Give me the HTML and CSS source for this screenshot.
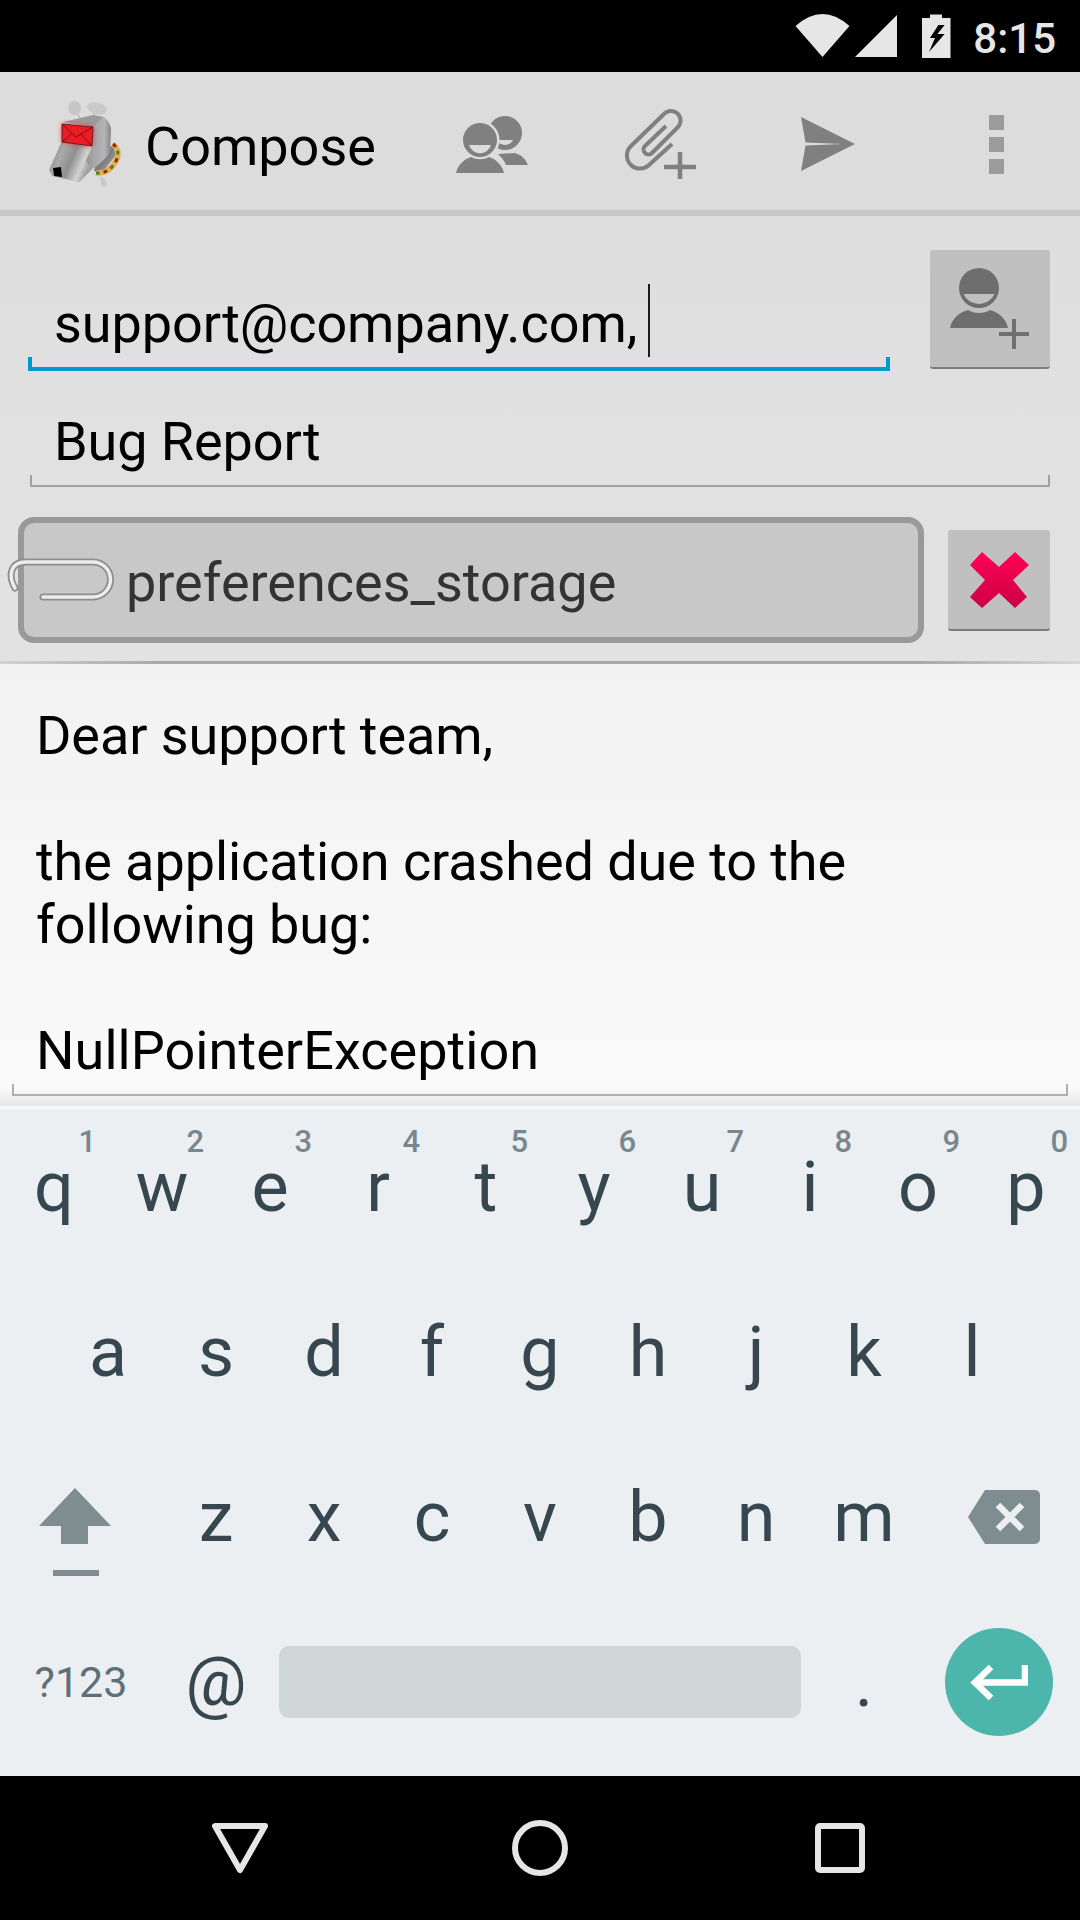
FILE: index.html
```html
<!DOCTYPE html>
<html lang="en">
<head>
<meta charset="utf-8">
<title>Compose</title>
<link rel="stylesheet" href="styles.css">
</head>
<body>
<div class="screen">
  <header class="status">
    <svg class="st-wifi" width="56" height="44" viewBox="0 0 56 44"><path d="M0.500 12 Q27.5 -12 54.500 12 L27.5 43 Z" fill="#e6e6e6"/></svg>
    <svg class="st-signal" width="44" height="44" viewBox="0 0 44 44"><path d="M1 43 L43 1 V43 Z" fill="#e6e6e6"/></svg>
    <svg class="st-batt" width="30" height="44" viewBox="0 0 30 44"><path d="M9 0.500 H21 V4 H29.500 V44 H1 V4 H9 Z" fill="#e6e6e6"/><path d="M17.400 11 L9 24 H14 L8 38 L23.600 20 H16.400 L23.600 11 Z" fill="#000"/></svg>
    <span class="st-time">8:15</span>
  </header>

  <nav class="toolbar">
    <svg class="logo" width="110" height="110" viewBox="0 1 110 110">
      <defs>
        <linearGradient id="side" x1="0" y1="0" x2="1" y2="0">
          <stop offset="0" stop-color="#7f7f81"/><stop offset="0.450" stop-color="#a6a6a8"/><stop offset="0.800" stop-color="#b4b4b6"/><stop offset="1" stop-color="#858587"/>
        </linearGradient>
        <linearGradient id="snout" x1="0" y1="0" x2="1" y2="0.400">
          <stop offset="0" stop-color="#7b7b7d"/><stop offset="0.350" stop-color="#aaaaab"/><stop offset="0.600" stop-color="#8f8f91"/><stop offset="0.850" stop-color="#d2d2d2"/><stop offset="1" stop-color="#a0a0a2"/>
        </linearGradient>
        <linearGradient id="neck" x1="0" y1="0" x2="1" y2="1">
          <stop offset="0" stop-color="#d8d8d8"/><stop offset="0.500" stop-color="#7a7a7a"/><stop offset="1" stop-color="#b8b8b8"/>
        </linearGradient>
        <filter id="glow" x="-30%" y="-40%" width="160%" height="180%"><feGaussianBlur stdDeviation="2.500"/></filter>
      </defs>
      <ellipse cx="44.500" cy="23" rx="6.500" ry="7" fill="#c6c6c6"/>
      <ellipse cx="67" cy="23.500" rx="10" ry="6" transform="rotate(15 67 23.500)" fill="#c9c9c9"/>
      <path d="M48 29 L51 36 M64 29 L66 35" stroke="#bdbdbd" stroke-width="1.500" fill="none"/>
      <path d="M67 70 L83 60 L86 70 L72 88 L64 86 Z" fill="url(#neck)"/>
      <path d="M83 59 Q91 66 86 76 Q79 89 66 88" fill="none" stroke="#e3b04a" stroke-width="5.500"/>
      <path d="M83 59 Q91 66 86 76 Q79 89 66 88" fill="none" stroke="#8c2a1c" stroke-width="3" stroke-dasharray="4 12"/>
      <path d="M83 59 Q91 66 86 76 Q79 89 66 88" fill="none" stroke="#4f7a3a" stroke-width="3" stroke-dasharray="4 12" stroke-dashoffset="8"/>
      <path d="M70 91 Q75 93 77 99 Q74 104 71 99 Z" fill="#c8c8c8"/>
      <path d="M33 37 L63 30 L74 32 L63 42 Z" fill="#9b9b9d"/>
      <path d="M63 41 L74 32 Q81 38 81 45 L80 68 Q72 78 62 84 L49 97 L56 78 L50 62 L62 60 Z" fill="url(#side)"/>
      <path d="M32 56 L63 60 L56 76 L62 84 L49 97 L22 91 L19 85 Z" fill="url(#snout)"/>
      <path d="M23 83 L31 82 L32 92 L24 91 Z" fill="#000"/>
      <path d="M32 39 L63 42 L62 61 L32 57 Z" fill="#ff2020" filter="url(#glow)"/>
      <path d="M32 39 L63 42 L62 61 L32 57 Z" fill="#ed1c24" stroke="#3a1a1a" stroke-width="0.800"/>
      <path d="M32 39 L46 52 L63 42 M32 57 L42 48.500 M62 61 L51 49" fill="none" stroke="#5a1010" stroke-width="0.800"/>
    </svg>
    <h1 class="title">Compose</h1>
    <div class="actions">
      <div class="action">
        <svg width="76" height="64" viewBox="0 -4 76 64">
          <circle cx="51" cy="20" r="17" fill="#808080"/>
          <path d="M43 27 H59 A9 9 0 0 1 43 27 Z" fill="#dcdcdc"/>
          <path d="M61 40 C68 42 72 47 74 52 H52 C50 47 47 44 44 41 Z" fill="#808080"/>
          <circle cx="26" cy="27" r="19.500" fill="#dcdcdc"/>
          <circle cx="26" cy="27" r="17" fill="#808080"/>
          <path d="M15 32 H37 A11.500 11.500 0 0 1 15 32 Z" fill="#dcdcdc"/>
          <path d="M2 60 C4 51 11 46 17 44 C22 47 30 47 35 44 C41 46 48 51 50 60 Z" fill="#808080"/>
        </svg>
      </div>
      <div class="action">
        <svg width="76" height="76" viewBox="0 0 76 76">
          <path d="M50 41 L27 62 A13 13 0 0 1 9 43 L42 11 A9.500 9.500 0 0 1 56 24 L30 50 A4.500 4.500 0 0 1 23 43 L44 23" fill="none" stroke="#808080" stroke-width="4"/>
          <path d="M42 64 H74 M58 49 V80" fill="none" stroke="#808080" stroke-width="4.500"/>
        </svg>
      </div>
      <div class="action action-send">
        <svg width="56" height="56" viewBox="0 0 56 56">
          <path d="M1 1 L55 28 L1 55 L5.500 29.500 L42 28 L5.500 26.500 Z" fill="#808080"/>
        </svg>
      </div>
      <div class="action overflow">
        <span class="dot"></span><span class="dot"></span><span class="dot"></span>
      </div>
    </div>
  </nav>

  <section class="form">
    <div class="row-to">
      <div class="field field-active">
        <span class="field-text">support@company.com,<span class="caret"></span></span>
      </div>
      <button class="btn btn-add" type="button" aria-label="Add contact">
        <svg width="120" height="117" viewBox="0 0 120 117">
          <circle cx="49" cy="38" r="20" fill="#6e6e6e"/>
          <path d="M33.500 44 H64.500 A17 17 0 0 1 33.500 44 Z" fill="#c0c0c0"/>
          <path d="M20 78 C22 68 30 62 38 60 C44 64 54 64 60 60 C68 62 76 68 78 78 Z" fill="#6e6e6e"/>
          <path d="M69 84 H99 M84 69 V99" fill="none" stroke="#707070" stroke-width="4"/>
        </svg>
      </button>
    </div>
    <div class="field field-subject"><span class="field-text">Bug Report</span></div>
    <div class="row-attach">
      <div class="attachment">
        <svg class="clip" width="110" height="50" viewBox="0 0 110 50">
          <path d="M9 31 C2 19 4 5 20 5 H87 A17.500 17.500 0 0 1 87 40 H37" fill="none" stroke="#8d8d8d" stroke-width="7" stroke-linecap="round"/>
          <path d="M9 31 C2 19 4 5 20 5 H87 A17.500 17.500 0 0 1 87 40 H37" fill="none" stroke="#ececec" stroke-width="3.500" stroke-linecap="round"/>
        </svg>
        <span class="attach-name">preferences_storage</span>
      </div>
      <button class="btn btn-del" type="button" aria-label="Remove">
        <svg width="102" height="99" viewBox="0 0 102 99">
          <defs><linearGradient id="xred" x1="0" y1="0" x2="0" y2="1"><stop offset="0" stop-color="#ff0055"/><stop offset="1" stop-color="#cc0044"/></linearGradient></defs>
          <path d="M34 22 L51 37 L67 22 L81 35 L65 50 L79 67 L67 78 L51 63 L34 78 L22 67 L37 50 L22 35 Z" fill="url(#xred)"/>
        </svg>
      </button>
    </div>
  </section>
  <div class="divider"></div>

  <section class="message">
    <div class="message-box">
      <p class="line">Dear support team,</p>
      <p class="line">&nbsp;</p>
      <p class="line">the application crashed due to the</p>
      <p class="line">following bug:</p>
      <p class="line">&nbsp;</p>
      <p class="line line-code">NullPointerException</p>
    </div>
  </section>
  <div class="kbd-top"></div>

  <section class="keyboard">
    <div class="kb-row">
      <div class="key">q<span class="hint">1</span></div>
      <div class="key">w<span class="hint">2</span></div>
      <div class="key">e<span class="hint">3</span></div>
      <div class="key">r<span class="hint">4</span></div>
      <div class="key">t<span class="hint">5</span></div>
      <div class="key">y<span class="hint">6</span></div>
      <div class="key">u<span class="hint">7</span></div>
      <div class="key">i<span class="hint">8</span></div>
      <div class="key">o<span class="hint">9</span></div>
      <div class="key">p<span class="hint">0</span></div>
    </div>
    <div class="kb-row">
      <div class="key">a</div><div class="key">s</div><div class="key">d</div><div class="key">f</div><div class="key">g</div><div class="key">h</div><div class="key">j</div><div class="key">k</div><div class="key">l</div>
    </div>
    <div class="kb-row">
      <div class="key key-wide key-shift">
        <svg width="72" height="88" viewBox="0 0 72 88"><path d="M36 0 L72 38 H49 V56 H22 V38 H0 Z M14 82 H60 V88 H14 Z" fill="#7f8c90"/></svg>
      </div>
      <div class="key">z</div><div class="key">x</div><div class="key">c</div><div class="key">v</div><div class="key">b</div><div class="key">n</div><div class="key">m</div>
      <div class="key key-wide key-back">
        <svg width="72" height="54" viewBox="0 0 72 54"><path d="M17 0 H67 A5 5 0 0 1 72 5 V49 A5 5 0 0 1 67 54 H17 L0 27 Z" fill="#7f8c90"/><path d="M30 15 L54 39 M54 15 L30 39" stroke="#eceff1" stroke-width="6.500" fill="none"/></svg>
      </div>
    </div>
    <div class="kb-row kb-bottom">
      <div class="key key-wide key-sym">?123</div>
      <div class="key key-at">@</div>
      <div class="key key-space"><span class="space-bar"></span></div>
      <div class="key">.</div>
      <div class="key key-wide key-enter">
        <span class="enter-fab">
          <svg width="58" height="36" viewBox="0 0 58 36"><path d="M55 1 V18.500 H6 M21 3 L5 18.500 L21 34" fill="none" stroke="#fff" stroke-width="6.500"/></svg>
        </span>
      </div>
    </div>
  </section>

  <footer class="navbar">
    <div class="nav-cell"><svg width="60" height="54" viewBox="0 0 60 54"><path d="M5 5 H55 L30 49 Z" fill="none" stroke="#e6e6e6" stroke-width="6" stroke-linejoin="round"/></svg></div>
    <div class="nav-cell"><svg width="56" height="56" viewBox="0 0 56 56"><circle cx="28" cy="28" r="25" fill="none" stroke="#e6e6e6" stroke-width="6"/></svg></div>
    <div class="nav-cell"><svg width="50" height="50" viewBox="0 0 50 50"><rect x="3" y="3" width="44" height="44" rx="2" fill="none" stroke="#e6e6e6" stroke-width="6"/></svg></div>
  </footer>
</div>
</body>
</html>
```
FILE: styles.css
```css
* { box-sizing: border-box; }
html, body { margin: 0; padding: 0; }
body { background: #000; font-family: Roboto, "Liberation Sans", sans-serif; }
.screen { width: 1080px; height: 1920px; display: flex; flex-direction: column; overflow: hidden; }

/* Status bar */
.status { height: 72px; background: #000; display: flex; align-items: center; justify-content: flex-end; padding-right: 24px; flex: none; }
.st-wifi { margin-right: 3px; }
.st-signal { margin-right: 23px; }
.st-batt { margin-right: 22px; }
.st-time { color: #e6e6e6; font-size: 42px; font-weight: 500; line-height: 72px; padding-top: 3px; height: 72px; }

/* Toolbar */
.toolbar { height: 144px; flex: none; display: flex; align-items: center; padding-left: 30px; background: #dcdcdc; border-bottom: 6px solid #c8c8c8; }
.logo { flex: none; }
.title { margin: 0 0 0 5px; padding-top: 11px; font-size: 54px; font-weight: 400; line-height: 63px; color: #000; }
.actions { margin-left: auto; display: flex; width: 672px; }
.action { width: 168px; height: 138px; display: flex; align-items: center; justify-content: center; }
.action-send { padding-top: 6px; }
.overflow { flex-direction: column; gap: 7px; padding-top: 6px; }
.dot { width: 15px; height: 15px; background: #9b9b9b; }

/* Form */
.form { flex: none; height: 445px; padding: 34px 30px 0 18px; background: linear-gradient(#dfdfdf, #e2e2e2); display: flex; flex-direction: column; }
.row-to { display: flex; align-items: flex-end; justify-content: space-between; height: 121px; }
.field { position: relative; display: block; }
.field::before, .field::after { content: ""; position: absolute; bottom: 0; width: 2px; height: 12px; background: inherit; }
.field::before { left: 0; }
.field::after { right: 0; }
.field-text { display: block; font-size: 54px; line-height: 63px; color: #000; padding-left: 26px; white-space: nowrap; letter-spacing: -0.08px; }
.field-active { width: 862px; margin-left: 10px; padding-bottom: 14px; background: linear-gradient(#0099cc, #0099cc) bottom / 100% 4px no-repeat; }
.field-active::before, .field-active::after { width: 4px; height: 14px; background: #0099cc; }
.field-subject { width: 1020px; margin: 39px 0 0 12px; padding-bottom: 14px; background: linear-gradient(#a0a0a0, #a0a0a0) bottom / 100% 2px no-repeat; }
.field-subject .field-text { padding-left: 24px; }
.field-subject::before, .field-subject::after { height: 12px; background: #a0a0a0; }
.caret { display: inline-block; width: 2px; height: 73px; background: #1a1a1a; margin-left: 11px; vertical-align: -15px; }
.btn { display: block; padding: 0; border: 0; background: #c0c0c0; border-radius: 3px; flex: none; }
.btn svg { display: block; }
.btn-add { width: 120px; height: 119px; margin-bottom: 2px; border-bottom: 2px solid #7c7c7c; }
.row-attach { display: flex; align-items: center; justify-content: space-between; margin-top: 30px; height: 126px; }
.attachment { position: relative; width: 906px; height: 126px; border: 6px solid #999; border-radius: 16px; background: #c8c8c8; display: flex; align-items: center; padding: 4px 0 0 102px; }
.attach-name { font-size: 54px; line-height: 63px; color: #333; white-space: nowrap; }
.clip { position: absolute; left: -18px; top: 34px; }
.btn-del { width: 102px; height: 101px; border-bottom: 2px solid #7c7c7c; }
.divider { flex: none; height: 3px; background: linear-gradient(90deg, #d2d2d2, #a8a8a8 15%, #a8a8a8 85%, #d8d8d8); }

/* Message */
.message { flex: none; height: 442px; padding: 40px 12px 0; background: linear-gradient(#f2f2f2 0, #fafafa 96%, #f0f0f0 98%, #e6e6e6 100%); }
.message-box { position: relative; padding: 0 0 14px 25px; background: linear-gradient(#b0b0b0, #b0b0b0) bottom / 100% 2px no-repeat; }
.message-box::before, .message-box::after { content: ""; position: absolute; bottom: 0; width: 2px; height: 12px; background: #b0b0b0; }
.message-box::before { left: 0; }
.message-box::after { right: 0; }
.line { margin: 0 0 0 -1px; font-size: 54px; line-height: 63px; color: #000; white-space: nowrap; letter-spacing: -0.08px; }
.line-code { letter-spacing: 0.05px; }
.kbd-top { flex: none; height: 3px; background: #f5f7f8; }

/* Keyboard */
.keyboard { flex: none; height: 667px; background: #eceff1; }
.kb-row { display: flex; justify-content: center; height: 165px; padding-bottom: 9px; }
.kb-bottom { height: 172px; padding-bottom: 16px; }
.key { position: relative; width: 108px; display: flex; align-items: center; justify-content: center; font-size: 70px; line-height: 1; color: #37474f; flex: none; }
.hint { position: absolute; top: 17px; right: 12px; font-size: 31px; line-height: 32px; font-weight: 500; color: #78868e; }
.key-wide { width: 162px; }
.key-shift { padding: 30px 12px 0 0; }
.key-back { padding: 0 0 0 10px; }
.key-sym { font-size: 43px; color: #5f6f78; }
.key-at { font-size: 68px; }
.key-space { width: 540px; padding: 0 9px; }
.space-bar { display: block; width: 100%; height: 72px; border-radius: 10px; background: #d0d5d8; }
.enter-fab { width: 108px; height: 108px; border-radius: 50%; background: #4db6ac; display: flex; align-items: center; justify-content: center; }

/* Navigation */
.navbar { flex: none; height: 144px; background: #000; display: flex; padding: 0 90px; }
.nav-cell { width: 300px; display: flex; align-items: center; justify-content: center; }
```
